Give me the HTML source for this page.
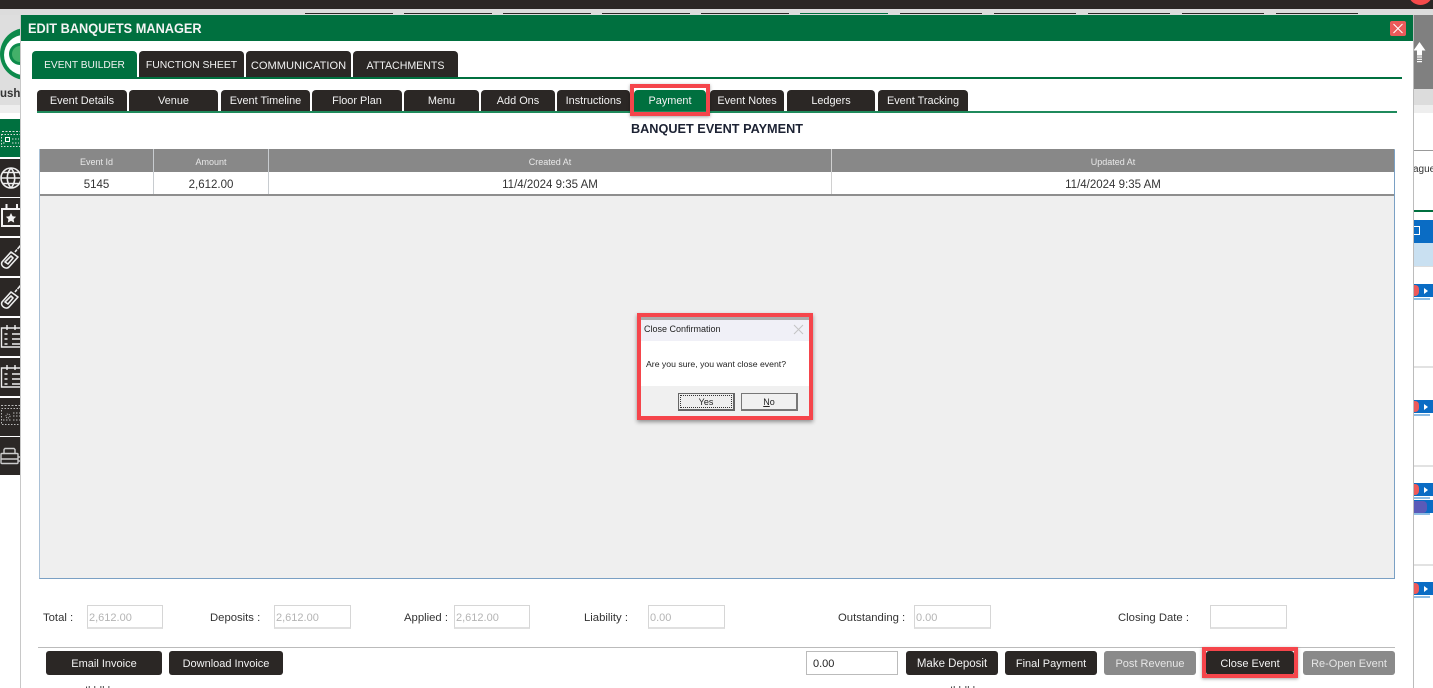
<!DOCTYPE html>
<html>
<head>
<meta charset="utf-8">
<style>
html,body{margin:0;padding:0;width:1433px;height:688px;overflow:hidden;background:#fff;font-family:"Liberation Sans",sans-serif;color:#222}
.a{position:absolute;box-sizing:border-box}
.t{position:absolute;box-sizing:border-box;white-space:nowrap;text-align:center}
.tab{position:absolute;box-sizing:border-box;background:#2b2725;color:#f2f2f2;border-radius:4px 4px 0 0;text-align:center;white-space:nowrap}
.top{top:51px;height:26px;line-height:27px;line-height:30px;font-size:10.4px}
.sub{top:90px;height:21px;line-height:23.5px;font-size:10.9px}
.side{position:absolute;left:0;width:20px;height:38px;background:#2b2725;overflow:hidden}
.lbl{position:absolute;font-size:11.3px;line-height:14px;top:611px;white-space:nowrap;color:#333}
.inp{position:absolute;box-sizing:border-box;top:605px;height:24px;width:76px;background:#fff;border:1px solid #d6d6d6;border-bottom:2px solid #e0e0e0;color:#b4b4b4;font-size:11px;line-height:24px;padding-left:1px;white-space:nowrap}
.btn{position:absolute;box-sizing:border-box;top:651px;height:24px;background:#2b2725;color:#f2f2f2;border-radius:3px;font-size:11px;line-height:26px;text-align:center;white-space:nowrap}
.gr{background:#8a8a8a;color:#e6e6e6}
.hd{position:absolute;top:149px;height:23px;font-size:9px;line-height:26px;color:#e8e8e8;text-align:center}
.cell{position:absolute;top:173px;height:21px;font-size:11.5px;line-height:24px;color:#333;text-align:center}
.rb{position:absolute;left:1414px;width:19px;height:13px;background:#0a6cc4}
</style>
</head>
<body>
<!-- page behind -->
<div class="a" style="left:0;top:0;width:1433px;height:9px;background:#2b2725"></div>
<div class="a" style="left:0;top:9px;width:1433px;height:6px;background:#dcdcdc"></div>
<div class="a" style="left:1408px;top:-20px;width:25px;height:25px;background:#f64a4a;border-radius:50%"></div>
<div class="a" style="left:0;top:15px;width:20px;height:90px;background:#dedede"></div>
<div class="a" style="left:0;top:28px;width:20px;height:54px;overflow:hidden">
  <div class="a" style="left:0;top:0;width:52px;height:52px;border-radius:50%;background:#0d8a4b"></div>
  <div class="a" style="left:4px;top:7px;width:40px;height:40px;border-radius:50%;background:#fff"></div>
  <div class="a" style="left:9px;top:15px;width:22px;height:22px;border-radius:50%;background:#0d8a4b"></div>
  <div class="a" style="left:12px;top:18px;width:16px;height:16px;border-radius:50%;background:#43b069"></div>
</div>
<div class="a" style="left:0;top:87px;width:20px;font-size:11.5px;font-weight:bold;color:#333;line-height:14px;overflow:hidden;white-space:nowrap">ushv</div>
<div class="a" style="left:0;top:105px;width:20px;height:8px;background:#eee"></div>
<div class="a" style="left:0;top:113px;width:20px;height:6px;background:#fff"></div>

<div class="side" style="top:119px;background:#00703f"><svg width="20" height="38" fill="none" stroke="#ddd"><path d="M2 12.500h18" stroke-dasharray="2 1.500"/><rect x="1.500" y="15.500" width="20" height="12" stroke-dasharray="1.500 1.500"/><rect x="5.500" y="18.500" width="4" height="4" stroke="#fff"/><path d="M12 20h7M12 24h7M3 24h3" stroke-dasharray="1.500 1.500"/></svg></div>
<div class="side" style="top:159px"><svg width="20" height="38" fill="none" stroke="#eee" stroke-width="1.600"><circle cx="11" cy="19" r="10"/><path d="M1 19h20M11 9c-5 6-5 14 0 20M11 9c5 6 5 14 0 20M3 13.500h16M3 24.500h16"/></svg></div>
<div class="side" style="top:198px"><svg width="20" height="38" fill="none" stroke="#f2f2f2" stroke-width="2"><rect x="2" y="11" width="24" height="17"/><path d="M6.500 6v5M17 6v5"/><path d="M11 15l1.600 3.200 3.500.5-2.500 2.400.6 3.500-3.200-1.700-3.200 1.700.6-3.500-2.500-2.400 3.500-.5z" fill="#f2f2f2" stroke="none"/></svg></div>
<div class="side" style="top:238px"><svg width="20" height="38" fill="none" stroke="#eee" stroke-width="1.600"><path d="M2 24l9-10 7 5-9 10c-3 3-9 -1-7-5zM5 24l6-6 2 2-5 6zM15 14l2-2.500M17.500 11l3-3.500" stroke-linejoin="round"/></svg></div>
<div class="side" style="top:278px"><svg width="20" height="38" fill="none" stroke="#eee" stroke-width="1.600"><path d="M2 24l9-10 7 5-9 10c-3 3-9 -1-7-5zM5 24l6-6 2 2-5 6zM15 14l2-2.500M17.500 11l3-3.500" stroke-linejoin="round"/></svg></div>
<div class="side" style="top:318px"><svg width="20" height="38" fill="none" stroke="#eee" stroke-width="1.400"><path d="M21 10H1.500v19H21"/><path d="M7 7v5M15 7v5M12 16h9M12 21h9M12 26h9M4.500 16h3M4.500 21h3M4.500 26h3"/></svg></div>
<div class="side" style="top:358px"><svg width="20" height="38" fill="none" stroke="#eee" stroke-width="1.400"><path d="M21 10H1.500v19H21"/><path d="M7 7v5M15 7v5M12 16h9M12 21h9M12 26h9M4.500 16h3M4.500 21h3M4.500 26h3"/></svg></div>
<div class="side" style="top:398px"><svg width="20" height="38" fill="none" stroke="#bbb"><path d="M1 7.500h20" stroke-dasharray="2 1.500"/><rect x="1.500" y="10.500" width="20" height="16" stroke-dasharray="1.500 1.500"/><circle cx="8" cy="18" r="2" stroke-dasharray="1 1"/><path d="M13 15h7M13 18h7M13 22h7M3 22h8" stroke-dasharray="1.500 1.500"/></svg></div>
<div class="side" style="top:437px"><svg width="20" height="38" fill="none" stroke="#ccc" stroke-width="1.400"><rect x="1" y="16.500" width="17" height="10" rx="1"/><path d="M4 16.500v-4l1-1h9l1 1v4M1 22h17M18 20h2M18 24h2"/></svg></div>

<div class="a" style="left:20px;top:15px;width:1px;height:673px;background:#c8c8c8"></div>

<!-- right side behind -->
<div class="a" style="left:1413px;top:15px;width:20px;height:74px;background:#808080"></div>
<svg class="a" style="left:1413px;top:40px" width="20" height="24"><path d="M6.500 2l6 8.500h-3.500v5h-5v-5h-3.500z" fill="#fff"/><path d="M4 17h5M4 19.300h5M4 21.600h5" stroke="#fff" stroke-width="1.200"/></svg>
<div class="a" style="left:1413px;top:89px;width:20px;height:16px;background:#dcdcdc"></div>
<div class="a" style="left:1413px;top:105px;width:20px;height:8px;background:#eee"></div>
<div class="a" style="left:1413px;top:150px;width:20px;height:1px;background:#999"></div>
<div class="a" style="left:1413px;top:163px;width:20px;height:13px;font-size:10px;line-height:13px;color:#333;overflow:hidden;white-space:nowrap">ague</div>
<div class="a" style="left:1413px;top:210px;width:20px;height:2px;background:#00703f"></div>
<div class="a" style="left:1413px;top:220px;width:20px;height:23px;background:#0a6cc4"></div>
<div class="a" style="left:1413px;top:226px;width:7px;height:9px;background:#fff"></div>
<div class="a" style="left:1414px;top:227px;width:5px;height:7px;background:#0a6cc4"></div>
<div class="a" style="left:1413px;top:243px;width:20px;height:23px;background:#c9e0f1"></div>
<div class="a" style="left:1413px;top:266px;width:20px;height:1px;background:#ddd"></div>
<div class="a" style="left:1413px;top:366px;width:20px;height:2px;background:#e2e2e2"></div>
<div class="a" style="left:1413px;top:465px;width:20px;height:2px;background:#e2e2e2"></div>
<div class="a" style="left:1413px;top:564px;width:20px;height:2px;background:#e2e2e2"></div>
<div class="rb" style="top:284px"></div><div class="a" style="left:1413px;top:285px;width:6px;height:11px;background:#ee5a5a;border-radius:0 4px 4px 0"></div><div class="a" style="left:1414px;top:298px;width:16px;height:2px;background:#8cbce4"></div><div class="a" style="left:1424px;top:288px;border-left:4px solid #fff;border-top:3px solid transparent;border-bottom:3px solid transparent"></div>
<div class="rb" style="top:400px"></div><div class="a" style="left:1413px;top:401px;width:6px;height:11px;background:#ee5a5a;border-radius:0 4px 4px 0"></div><div class="a" style="left:1414px;top:414px;width:16px;height:2px;background:#8cbce4"></div><div class="a" style="left:1424px;top:404px;border-left:4px solid #fff;border-top:3px solid transparent;border-bottom:3px solid transparent"></div>
<div class="rb" style="top:483px"></div><div class="a" style="left:1413px;top:484px;width:6px;height:11px;background:#ee5a5a;border-radius:0 4px 4px 0"></div><div class="a" style="left:1414px;top:497px;width:16px;height:2px;background:#8cbce4"></div><div class="a" style="left:1424px;top:487px;border-left:4px solid #fff;border-top:3px solid transparent;border-bottom:3px solid transparent"></div>
<div class="rb" style="top:500px"></div><div class="a" style="left:1413px;top:501px;width:14px;height:12px;background:#5a5ab8;border-radius:0 4px 4px 0"></div><div class="a" style="left:1414px;top:513px;width:16px;height:2px;background:#8cbce4"></div>
<div class="rb" style="top:582px"></div><div class="a" style="left:1413px;top:583px;width:6px;height:11px;background:#ee5a5a;border-radius:0 4px 4px 0"></div><div class="a" style="left:1414px;top:596px;width:16px;height:2px;background:#8cbce4"></div><div class="a" style="left:1424px;top:586px;border-left:4px solid #fff;border-top:3px solid transparent;border-bottom:3px solid transparent"></div>
<div class="a" style="left:1413px;top:15px;width:1px;height:673px;background:#bcbcbc"></div>

<!-- top strip tabs -->
<div class="a" style="left:305px;top:13px;width:88px;height:1px;background:#2b2725"></div>
<div class="a" style="left:404px;top:13px;width:88px;height:1px;background:#2b2725"></div>
<div class="a" style="left:503px;top:13px;width:88px;height:1px;background:#2b2725"></div>
<div class="a" style="left:602px;top:13px;width:88px;height:1px;background:#2b2725"></div>
<div class="a" style="left:701px;top:13px;width:88px;height:1px;background:#2b2725"></div>
<div class="a" style="left:800px;top:13px;width:88px;height:1px;background:#00703f"></div>
<div class="a" style="left:900px;top:13px;width:82px;height:1px;background:#2b2725"></div>
<div class="a" style="left:994px;top:13px;width:82px;height:1px;background:#2b2725"></div>
<div class="a" style="left:1088px;top:13px;width:82px;height:1px;background:#2b2725"></div>
<div class="a" style="left:1182px;top:13px;width:82px;height:1px;background:#2b2725"></div>
<div class="a" style="left:1276px;top:13px;width:82px;height:1px;background:#2b2725"></div>

<!-- modal -->
<div class="a" style="left:21px;top:15px;width:1392px;height:26px;background:#00703f"></div>
<div class="a" style="left:28px;top:20px;font-size:13.5px;font-weight:bold;line-height:18px;color:#f4f4f4;white-space:nowrap;transform:scaleX(.945);transform-origin:0 0">EDIT BANQUETS MANAGER</div>
<div class="a" style="left:1390px;top:21px;width:16px;height:15px;background:#ea5a5a;border-radius:2px"></div>
<svg class="a" style="left:1390px;top:21px" width="16" height="15"><path d="M3.500 3l9 9M12.500 3l-9 9" stroke="#fff" stroke-width="1"/></svg>

<!-- main tabs -->
<div class="tab top" style="left:32px;width:105px;height:27px;background:#00703f;font-size:10.2px">EVENT BUILDER</div>
<div class="tab top" style="left:139px;width:105px">FUNCTION SHEET</div>
<div class="tab top" style="left:246px;width:105px;font-size:11.1px">COMMUNICATION</div>
<div class="tab top" style="left:353px;width:105px;font-size:10.6px">ATTACHMENTS</div>
<div class="a" style="left:32px;top:77px;width:1370px;height:2px;background:#00703f"></div>

<div class="tab sub" style="left:37px;width:90px">Event Details</div>
<div class="tab sub" style="left:129px;width:89px">Venue</div>
<div class="tab sub" style="left:221px;width:89px">Event Timeline</div>
<div class="tab sub" style="left:312px;width:90px">Floor Plan</div>
<div class="tab sub" style="left:404px;width:75px">Menu</div>
<div class="tab sub" style="left:481px;width:74px">Add Ons</div>
<div class="tab sub" style="left:557px;width:73px">Instructions</div>
<div class="tab sub" style="left:634px;width:72px;background:#00703f">Payment</div>
<div class="tab sub" style="left:710px;width:74px">Event Notes</div>
<div class="tab sub" style="left:787px;width:88px">Ledgers</div>
<div class="tab sub" style="left:878px;width:90px">Event Tracking</div>
<div class="a" style="left:37px;top:111px;width:1360px;height:2px;background:#1f8a5c"></div>
<div class="a" style="left:630px;top:84px;width:80px;height:32px;border:4px solid #f5454b;box-shadow:0 1px 3px rgba(0,0,0,.35)"></div>

<div class="t" style="left:530px;top:122px;width:374px;font-size:12.7px;line-height:15px;font-weight:bold;color:#1c2233">BANQUET EVENT PAYMENT</div>

<!-- table -->
<div class="a" style="left:39px;top:149px;width:1356px;height:430px;background:#efefef;border:1px solid #7aa0c4;border-top-color:#b5c8d8;border-left-color:#a9c0d6"></div>
<div class="a" style="left:40px;top:149px;width:1354px;height:23px;background:#888"></div>
<div class="a" style="left:40px;top:172px;width:1354px;height:22px;background:#fff"></div>
<div class="a" style="left:40px;top:194px;width:1354px;height:2px;background:#8e8e8e"></div>
<div class="a" style="left:153px;top:149px;width:1px;height:45px;background:#c8ccd0"></div>
<div class="a" style="left:268px;top:149px;width:1px;height:45px;background:#c8ccd0"></div>
<div class="a" style="left:831px;top:149px;width:1px;height:45px;background:#d0d0d0"></div>
<div class="hd" style="left:40px;width:113px">Event Id</div>
<div class="hd" style="left:154px;width:114px">Amount</div>
<div class="hd" style="left:269px;width:562px">Created At</div>
<div class="hd" style="left:832px;width:562px">Updated At</div>
<div class="cell" style="left:40px;width:113px">5145</div>
<div class="cell" style="left:154px;width:114px">2,612.00</div>
<div class="cell" style="left:269px;width:562px">11/4/2024 9:35 AM</div>
<div class="cell" style="left:832px;width:562px">11/4/2024 9:35 AM</div>

<!-- dialog -->
<div class="a" style="left:637px;top:313px;width:176px;height:107px;border:4px solid #f5454b;box-shadow:0 2px 4px rgba(0,0,0,.4);background:#f0f0f0"></div>
<div class="a" style="left:641px;top:317px;width:168px;height:3px;background:#aaa"></div>
<div class="a" style="left:641px;top:320px;width:168px;height:21px;background:#f0f0f7"></div>
<div class="a" style="left:641px;top:341px;width:168px;height:45px;background:#fff"></div>
<div class="a" style="left:644px;top:323px;font-size:9px;line-height:13px;color:#222;white-space:nowrap">Close Confirmation</div>
<svg class="a" style="left:793px;top:324px" width="11" height="11"><path d="M1 1l9 9M10 1l-9 9" stroke="#c4c4c4" stroke-width="1"/></svg>
<div class="a" style="left:646px;top:358px;font-size:8.7px;line-height:13px;color:#222;white-space:nowrap">Are you sure, you want close event?</div>
<div class="a" style="left:678px;top:393px;width:57px;height:18px;background:#eee;border:1px solid #666;border-bottom-width:2px;border-right-width:2px;font-size:9px;line-height:17px;text-align:center;color:#222"><span class="a" style="left:1px;top:1px;width:52px;height:13px;border:1px dotted #333"></span>Yes</div>
<div class="a" style="left:741px;top:393px;width:57px;height:18px;background:#f0f0f0;border:1px solid #777;border-bottom-width:2px;border-right-width:2px;font-size:9px;line-height:17px;text-align:center;color:#222"><u>N</u>o</div>

<!-- totals -->
<div class="lbl" style="left:43px">Total :</div>
<div class="inp" style="left:87px">2,612.00</div>
<div class="lbl" style="left:210px">Deposits :</div>
<div class="inp" style="left:274px;width:77px">2,612.00</div>
<div class="lbl" style="left:404px">Applied :</div>
<div class="inp" style="left:454px">2,612.00</div>
<div class="lbl" style="left:584px">Liability :</div>
<div class="inp" style="left:648px;width:77px">0.00</div>
<div class="lbl" style="left:838px">Outstanding :</div>
<div class="inp" style="left:914px;width:77px">0.00</div>
<div class="lbl" style="left:1118px">Closing Date :</div>
<div class="inp" style="left:1210px;width:77px"></div>
<div class="a" style="left:38px;top:647px;width:1357px;height:1px;background:#bbb"></div>

<!-- buttons -->
<div class="btn" style="left:46px;width:116px">Email Invoice</div>
<div class="btn" style="left:169px;width:114px">Download Invoice</div>
<div class="a" style="left:806px;top:651px;width:92px;height:24px;background:#fff;border:1px solid #bbb;font-size:11px;line-height:24px;padding-left:6px;color:#222">0.00</div>
<div class="btn" style="left:906px;width:92px;font-size:11.5px">Make Deposit</div>
<div class="btn" style="left:1005px;width:92px">Final Payment</div>
<div class="btn gr" style="left:1104px;width:92px">Post Revenue</div>
<div class="btn" style="left:1206px;width:88px">Close Event</div>
<div class="a" style="left:1202px;top:647px;width:96px;height:31px;border:4px solid #f5454b;box-shadow:0 1px 3px rgba(0,0,0,.35)"></div>
<div class="btn gr" style="left:1303px;width:92px">Re-Open Event</div>
<div class="a" style="left:85px;top:685px;width:55px;height:3px;overflow:hidden;font-size:11px;line-height:12px;color:#444">Ikhlkh</div>
<div class="a" style="left:950px;top:685px;width:40px;height:3px;overflow:hidden;font-size:11px;line-height:12px;color:#444">Ikhlkh</div>
</body>
</html>
